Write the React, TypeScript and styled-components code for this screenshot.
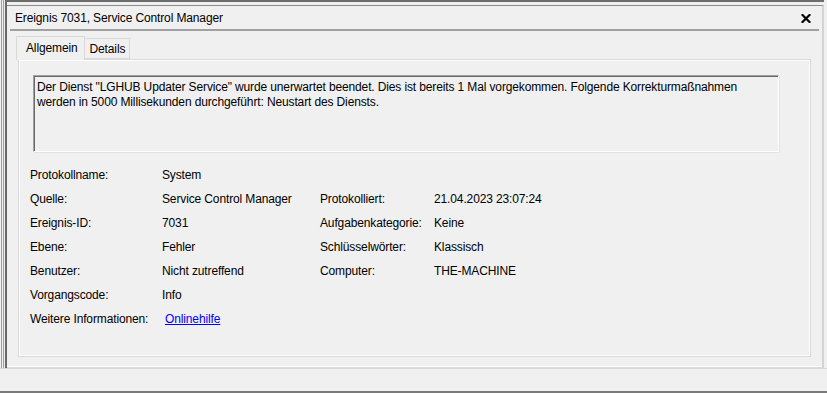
import styled, { createGlobalStyle } from 'styled-components'

const GlobalStyle = createGlobalStyle`
  html, body {
    margin: 0;
    padding: 0;
    background: #f0f0f0;
    font-family: "Liberation Sans", Arial, sans-serif;
    font-size: 12px;
    letter-spacing: -0.13px;
    color: #000;
  }
`

const Page = styled.div`
  width: 827px;
  height: 393px;
  display: flex;
  flex-direction: column;
  overflow: hidden;
`

const Pane = styled.div`
  height: 369px;
  box-sizing: border-box;
  display: flex;
  padding: 0 3px 0 1px;
  border-bottom: 1px solid #d8d8d8;
`

const Rail = styled.div`
  flex: 1;
  display: flex;
  border-left: 1px solid #a0a0a0;
  padding-left: 1px;
`

const Window = styled.div`
  flex: 1;
  display: flex;
  flex-direction: column;
  border-left: 2px solid #696969;
  border-top: 2px solid #6d6d6d;
`

const Inner = styled.div`
  flex: 1;
  display: flex;
  flex-direction: column;
  margin-top: 3px;
  border-top: 1px solid #8c8c8c;
  border-right: 2px solid #d4d4d4;
  border-bottom: 1px solid #dadada;
  box-shadow: inset 0 -1px 0 #ffffff;
`

const TitleRow = styled.div`
  height: 23px;
  display: flex;
  align-items: center;
  justify-content: space-between;
  padding: 1px 11px 0 8px;
  box-sizing: border-box;
`

const Title = styled.span`
  line-height: 15px;
`

const Separator = styled.div`
  height: 2px;
  background: #a0a0a0;
  margin: 0 3px 0 3px;
`

const TabStrip = styled.div`
  display: flex;
  align-items: flex-end;
  margin-top: 5px;
  padding-left: 9px;
  position: relative;
  z-index: 1;
`

const Tab = styled.div<{ $active?: boolean }>`
  box-sizing: border-box;
  height: ${p => (p.$active ? '24px' : '21px')};
  margin-bottom: ${p => (p.$active ? '-1px' : '0')};
  padding: ${p => (p.$active ? '4px 6px 0 9px' : '3px 4px 0 5px')};
  border: 1px solid #d9d9d9;
  border-bottom: ${p => (p.$active ? 'none' : '1px solid #d9d9d9')};
  border-left: ${p => (p.$active ? '1px solid #d9d9d9' : 'none')};
  background: #f0f0f0;
  line-height: 15px;
  white-space: nowrap;
`

const Panel = styled.div`
  flex: 1;
  margin: 0 11px 10px 11px;
  border: 1px solid #d9d9d9;
  box-shadow: inset 1px 1px 0 #ffffff, inset -1px -1px 0 #ffffff;
  padding: 15px 31px 0 0;
  display: flex;
  flex-direction: column;
`

const Description = styled.div`
  box-sizing: border-box;
  height: 77px;
  margin-left: 14px;
  padding: 4px 6px 0 3px;
  border-top: 1px solid #a0a0a0;
  border-left: 1px solid #a0a0a0;
  border-right: 1px solid #ffffff;
  border-bottom: 1px solid #ffffff;
  box-shadow: inset 1px 1px 0 #696969, 1px 1px 0 #e3e3e3;
  line-height: 15px;
`

const Fields = styled.div`
  display: grid;
  grid-template-columns: 132px 158px 114px 1fr;
  grid-auto-rows: 24px;
  align-items: center;
  margin-top: 11px;
  padding-left: 11px;
`

const Cell = styled.span`
  white-space: nowrap;
  line-height: 15px;
`

const Link = styled.a`
  color: #0000ff;
  text-decoration: underline;
  margin-left: 3px;
  cursor: pointer;
`

const StatusArea = styled.div`
  flex: 1;
  border-bottom: 2px solid #7a7a7a;
`

const CloseIcon = () => (
  <svg width="10" height="9" viewBox="0 0 10 9">
    <path d="M1.5 1 L8.5 8 M8.5 1 L1.5 8" stroke="#000" strokeWidth="2.2" strokeLinecap="square" />
  </svg>
)

const rows: [string, React.ReactNode, string?, string?][] = [
  ['Protokollname:', 'System'],
  ['Quelle:', 'Service Control Manager', 'Protokolliert:', '21.04.2023 23:07:24'],
  ['Ereignis-ID:', '7031', 'Aufgabenkategorie:', 'Keine'],
  ['Ebene:', 'Fehler', 'Schlüsselwörter:', 'Klassisch'],
  ['Benutzer:', 'Nicht zutreffend', 'Computer:', 'THE-MACHINE'],
  ['Vorgangscode:', 'Info'],
  ['Weitere Informationen:', <Link key="l">Onlinehilfe</Link>],
]

export default function App() {
  return (
    <Page>
      <GlobalStyle />
      <Pane>
        <Rail>
          <Rail>
            <Window>
              <Inner>
                <TitleRow>
                  <Title>Ereignis 7031, Service Control Manager</Title>
                  <CloseIcon />
                </TitleRow>
                <Separator />
                <TabStrip>
                  <Tab $active>Allgemein</Tab>
                  <Tab>Details</Tab>
                </TabStrip>
                <Panel>
                  <Description>
                    Der Dienst "LGHUB Updater Service" wurde unerwartet beendet. Dies ist bereits 1 Mal vorgekommen.
                    Folgende Korrekturmaßnahmen werden in 5000 Millisekunden durchgeführt: Neustart des Diensts.
                  </Description>
                  <Fields>
                    {rows.map(([a, b, c, d], i) => (
                      <>
                        <Cell key={`a${i}`}>{a}</Cell>
                        <Cell key={`b${i}`}>{b}</Cell>
                        <Cell key={`c${i}`}>{c ?? ''}</Cell>
                        <Cell key={`d${i}`}>{d ?? ''}</Cell>
                      </>
                    ))}
                  </Fields>
                </Panel>
              </Inner>
            </Window>
          </Rail>
        </Rail>
      </Pane>
      <StatusArea />
    </Page>
  )
}
